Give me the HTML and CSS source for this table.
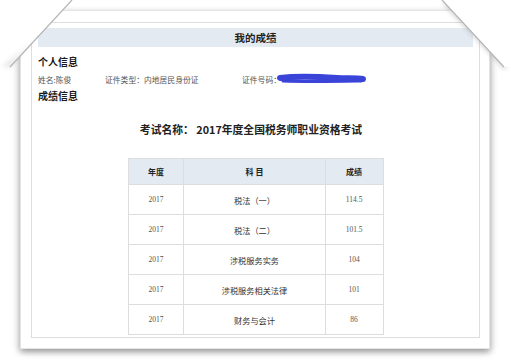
FILE: index.html
```html
<!DOCTYPE html>
<html lang="zh">
<head>
<meta charset="utf-8">
<title>我的成绩</title>
<link rel="stylesheet" href="styles.css">
</head>
<body>
<div class="card">
  <div class="panel">
    <div class="title-bar">我的成绩</div>
    <div class="section">个人信息</div>
    <div class="info-row">
      <span>姓名:陈俊</span>
      <span>证件类型：内地居民身份证</span>
      <span class="id-no">证件号码：<svg class="scribble" width="90" height="14" viewBox="0 0 90 14"><path d="M3 6 C20 4 45 5 60 6 C70 6.5 80 6 86 7" stroke="#3a44d8" stroke-width="6" stroke-linecap="round" fill="none"/><path d="M6 9 C30 10 55 9.5 84 9" stroke="#3a44d8" stroke-width="3" stroke-linecap="round" fill="none"/></svg></span>
    </div>
    <div class="section">成绩信息</div>
    <div class="exam-title">考试名称： 2017年度全国税务师职业资格考试</div>
    <table class="scores">
      <thead>
        <tr><th class="c-year">年度</th><th class="c-subj">科 目</th><th class="c-score">成绩</th></tr>
      </thead>
      <tbody>
        <tr><td class="num">2017</td><td class="subj">税法（一）</td><td class="num">114.5</td></tr>
        <tr><td class="num">2017</td><td class="subj">税法（二）</td><td class="num">101.5</td></tr>
        <tr><td class="num">2017</td><td class="subj">涉税服务实务</td><td class="num">104</td></tr>
        <tr><td class="num">2017</td><td class="subj">涉税服务相关法律</td><td class="num">101</td></tr>
        <tr><td class="num">2017</td><td class="subj">财务与会计</td><td class="num">86</td></tr>
      </tbody>
    </table>
  </div>
</div>
<svg class="corners" width="511" height="364" viewBox="0 0 511 364">
  <defs>
    <filter id="blur" x="-50%" y="-50%" width="200%" height="200%"><feGaussianBlur stdDeviation="2.5"/></filter>
    <linearGradient id="lshade" x1="0" y1="0" x2="0" y2="1">
      <stop offset="0" stop-color="#000" stop-opacity="0"/>
      <stop offset="1" stop-color="#000" stop-opacity="0.12"/>
    </linearGradient>
  </defs>
  <polygon points="0,0 72,0 10,67 0,67" fill="#fff"/>
  <polygon points="40,34 10,67 2,67" fill="url(#lshade)" filter="url(#blur)"/>
  <line x1="72" y1="0" x2="10" y2="67" stroke="#b5b5b5" stroke-width="1.2"/>
  <path d="M445 3 L506 68" stroke="#999" stroke-width="4" opacity="0.5" filter="url(#blur)"/>
  <polygon points="442,0 511,0 511,67 504,67" fill="#fff"/>
  <line x1="442" y1="0" x2="504" y2="67" stroke="#b5b5b5" stroke-width="1.2"/>
</svg>
</body>
</html>
```
FILE: styles.css
```css
html, body {
  margin: 0;
  padding: 0;
  background: #fff;
}
body {
  width: 511px;
  height: 364px;
  overflow: hidden;
  position: relative;
  padding: 10px 0 0 20px;
  box-sizing: border-box;
  font-family: "Noto Sans CJK SC", "Noto Sans", sans-serif;
  color: #222;
}
.card {
  width: 470px;
  height: 339px;
  box-sizing: border-box;
  padding: 11px 9px 10px 10px;
  background: #fff;
  border: 1px solid #e4e4e4;
  box-shadow: 0 4px 6px rgba(0,0,0,0.22), -3px 2px 6px rgba(0,0,0,0.12), 3px 2px 6px rgba(0,0,0,0.12);
}
.panel {
  height: 100%;
  box-sizing: border-box;
  border: 1px solid #dedede;
  padding: 5px 6px 0 6px;
}
.title-bar {
  height: 19px;
  line-height: 19px;
  background: #e4eaf1;
  text-align: center;
  font-size: 10.5px;
  font-weight: bold;
  color: #222;
}
.section {
  font-size: 10px;
  font-weight: bold;
  line-height: 14px;
  margin-top: 8px;
  color: #1a1a1a;
}
.info-row {
  display: grid;
  grid-template-columns: 67px 137px auto;
  margin-top: 5px;
  line-height: 12px;
  font-size: 7.8px;
  color: #555;
}
.info-row + .section {
  margin-top: 3px;
}
.id-no {
  display: flex;
  align-items: center;
}
.scribble {
  margin-left: -4px;
  margin-top: -2px;
}
.exam-title {
  margin-top: 18px;
  line-height: 16px;
  text-align: center;
  font-size: 10.8px;
  font-weight: bold;
  color: #222;
  padding-right: 9px;
}
.scores {
  margin: 21px auto 0;
  width: 256px;
  border-collapse: collapse;
  font-size: 8px;
}
.scores th, .scores td {
  border: 1px solid #dddddd;
  text-align: center;
  padding: 0;
}
.scores th {
  background: #e4eaf1;
  height: 25px;
  font-weight: bold;
  font-size: 8px;
  color: #222;
}
.scores td {
  height: 29px;
}
.c-year { width: 55px; }
.c-subj { width: 141px; }
.c-score { width: 57px; }
.scores td.num {
  font-family: "Liberation Serif", "DejaVu Serif", serif;
  font-size: 7.5px;
  color: #555;
}
.scores td.subj {
  font-size: 8.2px;
  color: #333;
}
.corners {
  position: absolute;
  left: 0;
  top: 0;
  pointer-events: none;
}
```
